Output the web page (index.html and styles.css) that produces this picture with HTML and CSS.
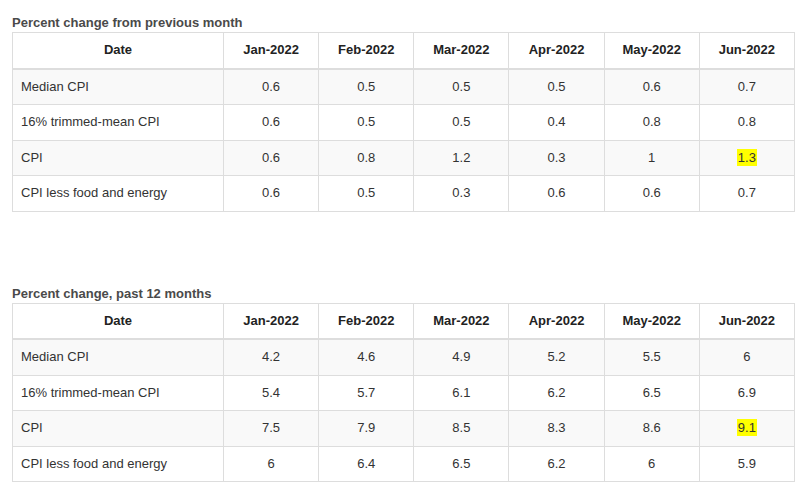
FILE: index.html
```html
<!DOCTYPE html>
<html>
<head>
<meta charset="utf-8">
<link rel="stylesheet" href="styles.css">
</head>
<body>
<div class="page">
  <section class="block first">
    <h4 class="title">Percent change from previous month</h4>
    <table class="data">
      <colgroup><col class="c-label"><col><col><col><col><col><col></colgroup>
      <thead>
        <tr><th>Date</th><th>Jan-2022</th><th>Feb-2022</th><th>Mar-2022</th><th>Apr-2022</th><th>May-2022</th><th>Jun-2022</th></tr>
      </thead>
      <tbody>
        <tr><td>Median CPI</td><td>0.6</td><td>0.5</td><td>0.5</td><td>0.5</td><td>0.6</td><td>0.7</td></tr>
        <tr><td>16% trimmed-mean CPI</td><td>0.6</td><td>0.5</td><td>0.5</td><td>0.4</td><td>0.8</td><td>0.8</td></tr>
        <tr><td>CPI</td><td>0.6</td><td>0.8</td><td>1.2</td><td>0.3</td><td>1</td><td><span class="hl">1.3</span></td></tr>
        <tr><td>CPI less food and energy</td><td>0.6</td><td>0.5</td><td>0.3</td><td>0.6</td><td>0.6</td><td>0.7</td></tr>
      </tbody>
    </table>
  </section>
  <section class="block second">
    <h4 class="title">Percent change, past 12 months</h4>
    <table class="data">
      <colgroup><col class="c-label"><col><col><col><col><col><col></colgroup>
      <thead>
        <tr><th>Date</th><th>Jan-2022</th><th>Feb-2022</th><th>Mar-2022</th><th>Apr-2022</th><th>May-2022</th><th>Jun-2022</th></tr>
      </thead>
      <tbody>
        <tr><td>Median CPI</td><td>4.2</td><td>4.6</td><td>4.9</td><td>5.2</td><td>5.5</td><td>6</td></tr>
        <tr><td>16% trimmed-mean CPI</td><td>5.4</td><td>5.7</td><td>6.1</td><td>6.2</td><td>6.5</td><td>6.9</td></tr>
        <tr><td>CPI</td><td>7.5</td><td>7.9</td><td>8.5</td><td>8.3</td><td>8.6</td><td><span class="hl">9.1</span></td></tr>
        <tr><td>CPI less food and energy</td><td>6</td><td>6.4</td><td>6.5</td><td>6.2</td><td>6</td><td>5.9</td></tr>
      </tbody>
    </table>
  </section>
</div>
</body>
</html>
```
FILE: styles.css
```css
html, body {
  margin: 0;
  padding: 0;
  background: #ffffff;
}
body {
  font-family: "Liberation Sans", Arial, sans-serif;
  font-size: 13px;
  color: #333333;
}
.page {
  padding: 14px 8px 0 12px;
}
.block.second {
  margin-top: 73px;
}
.title {
  margin: 0;
  font-size: 13px;
  line-height: 18px;
  font-weight: bold;
  color: #4a4a4a;
}
.data {
  width: 783px;
  border-collapse: collapse;
  table-layout: fixed;
  border: 1px solid #dddddd;
}
.c-label {
  width: 211px;
}
.data th,
.data td {
  border: 1px solid #dddddd;
  padding: 8px;
  line-height: 18.5px;
  text-align: center;
}
.data th {
  font-weight: bold;
  color: #222222;
  border-bottom: 2px solid #dddddd;
}
.data td:first-child {
  text-align: left;
  padding-left: 8px;
}
.data tbody tr:nth-child(odd) td {
  background: #f9f9f9;
}
.hl {
  background: #ffff00;
  padding: 1px 1px;
}
```
